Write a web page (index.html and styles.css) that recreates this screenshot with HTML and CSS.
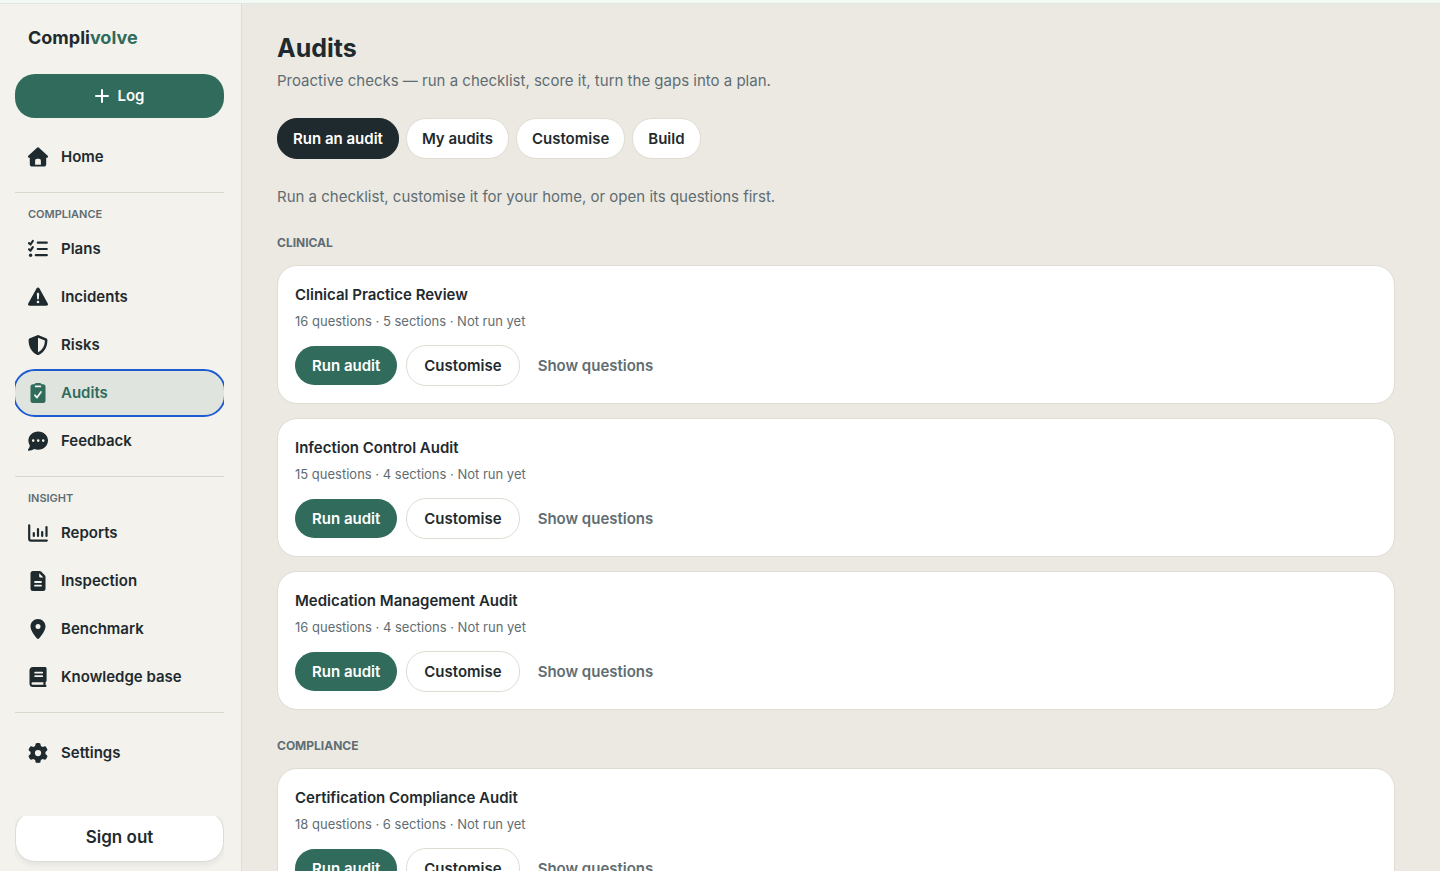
FILE: index.html
```html
<!DOCTYPE html>
<html lang="en">
<head>
    <meta charset="UTF-8">
    <meta name="viewport" content="width=device-width, initial-scale=1.0">
    <title>Audits - Complivolve</title>
    <link rel="stylesheet" href="styles.css">
</head>
<body>
    <div class="app">
        <aside class="sidebar">
            <div class="brand">Compli<span>volve</span></div>
            <nav class="nav">
                <button type="button" class="log-btn">
                    <svg class="plus" viewBox="0 0 14 14"><path d="M7 1v12M1 7h12"/></svg>
                    Log
                </button>
                <a href="#" class="nav-item">
                    <svg class="icon" viewBox="0 0 20 20"><path fill-rule="evenodd" d="M9.3.6a1 1 0 0 1 1.4 0l9 8.2c.7.7.3 1.900-.7 1.900h-.8V17a2.600 2.600 0 0 1-2.600 2.600H4.400A2.600 2.600 0 0 1 1.800 17v-6.300H1c-1 0-1.400-1.200-.7-1.900zM9 11.800a1.900 1.900 0 0 0-1.900 1.900v4h5.800v-4a1.900 1.900 0 0 0-1.900-1.900z"/></svg>
                    Home
                </a>
                <hr class="divider">
                <h2 class="nav-label">Compliance</h2>
                <a href="#" class="nav-item">
                    <svg class="icon line" viewBox="0 0 20 20"><path d="M1 4.100l1.500 1.400L4.800 2M1 10.300l1.500 1.400 2.300-3.500M9.800 3.700h9M9.800 10h9M7.800 16.200h11"/><circle class="dot" cx="2.600" cy="16.200" r="1.700"/></svg>
                    Plans
                </a>
                <a href="#" class="nav-item">
                    <svg class="icon" viewBox="0 0 512 512"><path d="M256 14c14.200 0 27.300 7.500 34.500 19.800l216 386c7.300 12.400 7.300 27.700.2 40.100S486.300 480 472 480H40c-14.300 0-27.600-7.700-34.700-20.100s-7-27.800.2-40.100l216-386C228.700 21.500 241.800 14 256 14zm0 136c-18 0-31 13-30 30l8 118c1 11 10 20 22 20s21-9 22-20l8-118c1-17-12-30-30-30zm34 234a34 34 0 1 0-68 0 34 34 0 1 0 68 0z"/></svg>
                    Incidents
                </a>
                <a href="#" class="nav-item">
                    <svg class="icon" viewBox="0 0 20 20"><path fill-rule="evenodd" d="M9.300.2a1.700 1.700 0 0 1 1.400 0l7.400 3.100c.8.4 1.300 1.100 1.300 2 0 5.500-2.200 11.500-8.300 14.400a2.500 2.500 0 0 1-2.200 0C2.800 16.800.6 10.800.6 5.300c0-.9.5-1.600 1.300-2zM10 2.700v14.700c4.700-2.300 6.800-6.800 6.900-11.800z"/></svg>
                    Risks
                </a>
                <a href="#" class="nav-item active" aria-current="page">
                    <svg class="icon" viewBox="0 0 20 20"><path d="M5 1.200h1.400C6.900.5 7.600 0 8.500 0h3c.9 0 1.600.5 2.100 1.200H15a2.500 2.500 0 0 1 2.500 2.500v13.800A2.500 2.500 0 0 1 15 20H5a2.500 2.500 0 0 1-2.500-2.500V3.700A2.500 2.500 0 0 1 5 1.200z"/><path class="cut" d="M7.700 3.400h4.600M7 12.300l2 2.300 4-5.600"/></svg>
                    Audits
                </a>
                <a href="#" class="nav-item">
                    <svg class="icon" viewBox="0 0 20 20"><path fill-rule="evenodd" d="M10.200.4c5.500 0 9.800 4.100 9.800 9.200s-4.300 9.200-9.800 9.200c-1.500 0-2.900-.3-4.200-.8-1.500.9-3.200 1.600-5.200 1.700-.8 0-1.100-.9-.6-1.500.9-1.100 1.500-2.300 1.700-3.500A8.700 8.700 0 0 1 .4 9.600C.4 4.500 4.700.4 10.200.4zM5.200 8.300a1.300 1.300 0 1 0 0 2.600 1.300 1.300 0 0 0 0-2.600zm5 0a1.300 1.300 0 1 0 0 2.600 1.300 1.300 0 0 0 0-2.600zm5 0a1.300 1.300 0 1 0 0 2.600 1.300 1.300 0 0 0 0-2.600z"/></svg>
                    Feedback
                </a>
                <hr class="divider">
                <h2 class="nav-label">Insight</h2>
                <a href="#" class="nav-item">
                    <svg class="icon line" viewBox="0 0 20 20"><path d="M1.200 2.300v13.500a1.800 1.800 0 0 0 1.800 1.800h15.800M5.800 10v3M10 6v7M14.200 9v4M18.500 4v9"/></svg>
                    Reports
                </a>
                <a href="#" class="nav-item">
                    <svg class="icon" viewBox="0 0 20 20"><path fill-rule="evenodd" d="M5 0h6.600c.7 0 1.300.3 1.800.7l3.400 3.500c.5.5.7 1.100.7 1.800v11.500A2.500 2.500 0 0 1 15 20H5a2.500 2.500 0 0 1-2.500-2.500v-15A2.500 2.500 0 0 1 5 0zm6.200 2.300v3.300c0 .5.4.9.9.9h3.300z"/><path class="cut" d="M7 11h6M7 14.700h6"/></svg>
                    Inspection
                </a>
                <a href="#" class="nav-item">
                    <svg class="icon" viewBox="-64 0 512 512"><path fill-rule="evenodd" d="M166 499C116 440 0 292 0 190 0 85 86 0 192 0s192 85 192 190c0 102-116 250-166 309-14 16-38 16-52 0zM192 256a64 64 0 1 0 0-128 64 64 0 1 0 0 128z"/></svg>
                    Benchmark
                </a>
                <a href="#" class="nav-item">
                    <svg class="icon" viewBox="0 0 20 20"><path fill-rule="evenodd" d="M5 0h12c.9 0 1.600.7 1.600 1.600v12c0 .7-.4 1.300-1 1.500v3c.6.1 1 .5 1 1s-.5.9-1.100.9H5a3.500 3.500 0 0 1-3.500-3.500v-13A3.500 3.500 0 0 1 5 0zm-.2 15.200a1.300 1.300 0 0 0 0 2.600h10.600v-2.600z"/><path class="cut" d="M7.200 5.700h7M7.200 9.200h7"/></svg>
                    Knowledge base
                </a>
                <hr class="divider">
                <a href="#" class="nav-item nav-settings">
                    <svg class="icon" viewBox="0 0 512 512"><path d="M495.900 166.600c3.200 8.700.5 18.400-6.400 24.600l-43.300 39.400c1.100 8.300 1.700 16.800 1.700 25.400s-.6 17.100-1.700 25.400l43.300 39.400c6.900 6.200 9.600 15.900 6.400 24.600-4.400 11.900-9.700 23.300-15.800 34.300l-4.700 8.100c-6.600 11-14 21.400-22.100 31.200-5.900 7.200-15.700 9.600-24.500 6.800l-55.700-17.700c-13.400 10.300-28.200 18.900-44 25.400l-12.500 57.100c-2 9.100-9 16.300-18.200 17.800-13.800 2.300-28 3.500-42.500 3.500s-28.700-1.200-42.500-3.500c-9.200-1.500-16.200-8.700-18.200-17.800l-12.500-57.100c-15.800-6.500-30.600-15.100-44-25.400L83.100 425.900c-8.800 2.800-18.600.3-24.500-6.800-8.100-9.800-15.500-20.200-22.100-31.200l-4.700-8.100c-6.100-11-11.400-22.400-15.800-34.300-3.200-8.700-.5-18.400 6.400-24.600l43.300-39.400C64.600 273.100 64 264.600 64 256s.6-17.100 1.700-25.400L22.400 191.200c-6.900-6.200-9.600-15.900-6.400-24.600 4.400-11.900 9.700-23.300 15.800-34.300l4.700-8.100c6.600-11 14-21.400 22.100-31.200 5.900-7.200 15.700-9.600 24.500-6.800l55.700 17.700c13.400-10.300 28.200-18.900 44-25.400l12.500-57.100c2-9.100 9-16.300 18.200-17.800C227.300 1.200 241.500 0 256 0s28.700 1.200 42.500 3.500c9.200 1.500 16.200 8.700 18.200 17.800l12.500 57.100c15.800 6.500 30.600 15.100 44 25.400l55.700-17.700c8.800-2.800 18.600-.3 24.500 6.800 8.100 9.800 15.500 20.200 22.100 31.200l4.700 8.100c6.100 11 11.400 22.400 15.800 34.300zM256 336a80 80 0 1 0 0-160 80 80 0 1 0 0 160z"/></svg>
                    Settings
                </a>
            </nav>
            <div class="sidebar-footer">
                <button type="button" class="signout-btn">Sign out</button>
            </div>
        </aside>

        <main class="main">
            <h1>Audits</h1>
            <p class="subtitle">Proactive checks — run a checklist, score it, turn the gaps into a plan.</p>

            <div class="tabs">
                <button type="button" class="tab selected">Run an audit</button>
                <button type="button" class="tab">My audits</button>
                <button type="button" class="tab">Customise</button>
                <button type="button" class="tab">Build</button>
            </div>

            <p class="intro">Run a checklist, customise it for your home, or open its questions first.</p>

            <section class="group">
                <h2>Clinical</h2>
                <article class="card">
                    <h3>Clinical Practice Review</h3>
                    <p>16 questions · 5 sections · Not run yet</p>
                    <div class="actions">
                        <button type="button" class="btn primary">Run audit</button>
                        <button type="button" class="btn outline">Customise</button>
                        <button type="button" class="btn ghost">Show questions</button>
                    </div>
                </article>
                <article class="card">
                    <h3>Infection Control Audit</h3>
                    <p>15 questions · 4 sections · Not run yet</p>
                    <div class="actions">
                        <button type="button" class="btn primary">Run audit</button>
                        <button type="button" class="btn outline">Customise</button>
                        <button type="button" class="btn ghost">Show questions</button>
                    </div>
                </article>
                <article class="card">
                    <h3>Medication Management Audit</h3>
                    <p>16 questions · 4 sections · Not run yet</p>
                    <div class="actions">
                        <button type="button" class="btn primary">Run audit</button>
                        <button type="button" class="btn outline">Customise</button>
                        <button type="button" class="btn ghost">Show questions</button>
                    </div>
                </article>
            </section>

            <section class="group">
                <h2>Compliance</h2>
                <article class="card">
                    <h3>Certification Compliance Audit</h3>
                    <p>18 questions · 6 sections · Not run yet</p>
                    <div class="actions">
                        <button type="button" class="btn primary">Run audit</button>
                        <button type="button" class="btn outline">Customise</button>
                        <button type="button" class="btn ghost">Show questions</button>
                    </div>
                </article>
            </section>
        </main>
    </div>
</body>
</html>
```
FILE: styles.css
```css
* {
    margin: 0;
    padding: 0;
    box-sizing: border-box;
}
body {
    font-family: Inter, "Liberation Sans", sans-serif;
    font-size: 15px;
    line-height: 20px;
    background-color: #ece9e2;
    color: #1f2a2e;
}
button {
    font-family: inherit;
    font-size: 15px;
    line-height: 20px;
    font-weight: 600;
    color: inherit;
    border: none;
    cursor: pointer;
}
.app {
    display: flex;
    height: 100vh;
    border-top: 3px solid #f3f9f5;
}

/* Sidebar */
.sidebar {
    display: flex;
    flex-direction: column;
    flex: 0 0 242px;
    padding: 21px 17px 0 15px;
    background-color: #f3f2ed;
    border-top: 1px solid #e0e7e3;
    border-right: 1px solid #dfdcd3;
}
.brand {
    padding: 0 13px;
    margin-bottom: 23px;
    font-size: 18px;
    line-height: 26px;
    font-weight: 700;
}
.brand span {
    color: #306b5c;
}
.nav {
    display: flex;
    flex-direction: column;
    gap: 4px;
    flex: 1;
    min-height: 0;
    overflow: hidden;
}
.log-btn {
    display: flex;
    align-items: center;
    justify-content: center;
    gap: 9px;
    height: 44px;
    flex-shrink: 0;
    margin-bottom: 13px;
    background-color: #306b5c;
    color: #fff;
    border-radius: 20px;
}
.plus {
    width: 14px;
    height: 14px;
    fill: none;
    stroke: #fff;
    stroke-width: 2;
    stroke-linecap: round;
}
.nav-item {
    display: flex;
    align-items: center;
    gap: 13px;
    height: 44px;
    flex-shrink: 0;
    padding: 0 13px;
    border-radius: 20px;
    color: #1f2a2e;
    font-weight: 600;
    text-decoration: none;
}
.nav-item.active {
    background-color: #dfe4de;
    color: #306b5c;
    outline: 2px solid #1f5bd0;
}
.icon {
    width: 20px;
    height: 20px;
    fill: currentColor;
}
.icon.line {
    fill: none;
    stroke: currentColor;
    stroke-width: 2.2;
    stroke-linecap: round;
    stroke-linejoin: round;
}
.icon .dot {
    fill: currentColor;
    stroke: none;
}
.icon .cut {
    fill: none;
    stroke: #f3f2ed;
    stroke-width: 1.8;
    stroke-linecap: round;
    stroke-linejoin: round;
}
.divider {
    flex-shrink: 0;
    margin-top: 9px;
    border: none;
    border-top: 1px solid #d9d7cc;
}
.nav-label {
    padding: 10px 13px 2px;
    font-size: 11px;
    line-height: 14px;
    font-weight: 600;
    text-transform: uppercase;
    color: #5f6d72;
}
.nav-settings {
    margin-top: 14px;
}
.sidebar-footer {
    display: flex;
    align-items: flex-end;
    flex: 0 0 55px;
    padding-bottom: 9px;
    overflow: hidden;
}
.signout-btn {
    flex: 1;
    height: 51px;
    background-color: #fff;
    border: 1px solid #dfdcd3;
    border-radius: 20px;
    box-shadow: 0 2px 6px rgba(31, 42, 46, 0.08);
    font-size: 17px;
}

/* Main column */
.main {
    flex: 1;
    min-width: 0;
    padding: 28px 45px 0 35px;
    border-top: 1px solid #e0e7e3;
    overflow: hidden;
}
h1 {
    font-size: 25px;
    line-height: 32px;
    font-weight: 700;
}
.subtitle,
.intro {
    font-size: 15px;
    line-height: 24px;
    color: #5f6d72;
}
.subtitle {
    margin-top: 5px;
}
.tabs {
    display: flex;
    gap: 7px;
    margin: 25px 0 26px;
}
.tab {
    height: 41px;
    padding: 0 15px;
    background-color: #fff;
    border: 1px solid #dfdcd3;
    border-radius: 20px;
}
.tab.selected {
    background-color: #1f2a2e;
    border-color: #1f2a2e;
    color: #fff;
}
.group {
    display: flex;
    flex-direction: column;
    gap: 14px;
    margin-top: 26px;
}
.group + .group {
    margin-top: 28px;
}
.group h2 {
    font-size: 12px;
    line-height: 16px;
    font-weight: 700;
    text-transform: uppercase;
    color: #5f6d72;
}
.card {
    padding: 19px 17px 17px;
    background-color: #fff;
    border: 1px solid #dfdcd3;
    border-radius: 20px;
}
.card h3 {
    font-size: 15px;
    line-height: 20px;
    font-weight: 600;
}
.card p {
    margin: 7px 0 15px;
    font-size: 13px;
    line-height: 18px;
    color: #5f6d72;
}
.actions {
    display: flex;
    align-items: center;
    gap: 9px;
}
.btn {
    height: 39px;
    padding: 0 17px;
    border-radius: 20px;
}
.btn.primary {
    background-color: #306b5c;
    color: #fff;
}
.btn.outline {
    height: 41px;
    background-color: #fff;
    border: 1px solid #dfdcd3;
}
.btn.ghost {
    padding: 0 9px;
    background-color: transparent;
    color: #5f6d72;
}
```
